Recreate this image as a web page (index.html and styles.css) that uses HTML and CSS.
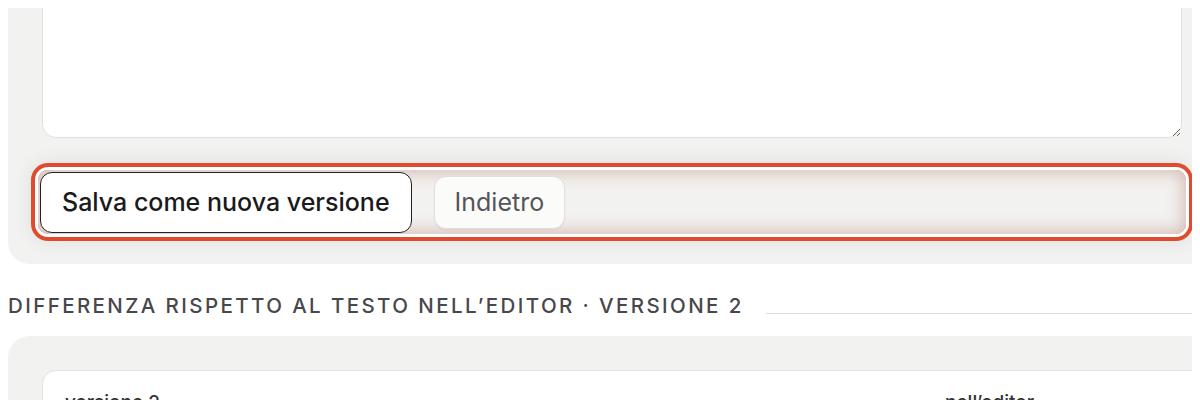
FILE: index.html
```html
<!DOCTYPE html>
<html lang="it">
<head>
<meta charset="utf-8">
<title>Editor versione</title>
<link rel="stylesheet" href="styles.css">
</head>
<body>
<div class="page">
  <section class="panel editor-panel">
    <textarea class="editor" aria-label="Testo"></textarea>
    <div class="actions highlight">
      <button class="btn btn-primary" type="button">Salva come nuova versione</button>
      <button class="btn btn-secondary" type="button">Indietro</button>
    </div>
  </section>

  <div class="section-title">
    <h2>Differenza rispetto al testo nell’editor · versione 2</h2>
    <span class="rule"></span>
  </div>

  <section class="panel diff-panel">
    <div class="diff-card">
      <div class="diff-head">
        <span class="col-left">versione 2</span>
        <span class="col-right">nell’editor</span>
      </div>
    </div>
  </section>
</div>
</body>
</html>
```

FILE: styles.css
```css
html {
  overflow: hidden;
  background: #ffffff;
}

body {
  margin: 8px;
  font-family: Inter, "Noto Sans", "Liberation Sans", sans-serif;
  color: #1c1c1c;
}

.page {
  margin-top: -49px;
  margin-right: -24px;
}

.panel {
  background: #f2f2f0;
  border-radius: 22px;
  padding: 34px;
}

.editor-panel {
  padding-bottom: 30px;
}

.editor {
  display: block;
  box-sizing: border-box;
  width: 100%;
  height: 145px;
  margin: 0;
  background: #ffffff;
  border: 1px solid #e0e0dd;
  border-radius: 14px;
  resize: vertical;
  font: inherit;
}

.actions {
  display: flex;
  align-items: center;
  gap: 22px;
  height: 64px;
  margin: 32px -4px 0;
  padding: 0 2px;
  box-sizing: border-box;
}

.highlight {
  border-radius: 10px;
  box-shadow:
    inset 0 0 16px 3px rgba(175, 115, 105, 0.42),
    0 0 0 3px #ffffff,
    0 0 0 7px #e04a2f,
    0 0 18px 8px rgba(0, 0, 0, 0.08);
}

.btn {
  font-family: Inter, "Noto Sans", "Liberation Sans", sans-serif;
  border-radius: 12px;
  cursor: pointer;
}

.btn-primary {
  height: 61px;
  padding: 0 21px;
  background: #ffffff;
  border: 1.5px solid #222222;
  color: #1a1a1a;
  font-size: 25px;
  font-weight: 500;
}

.btn-secondary {
  height: 53px;
  padding: 0 20px;
  background: #fbfbfa;
  border: 1px solid #e3dfdc;
  color: #55555a;
  font-size: 25px;
  font-weight: 400;
  box-shadow: 0 1px 2px rgba(0, 0, 0, 0.05);
}

.section-title {
  display: flex;
  align-items: flex-end;
  gap: 22px;
  margin-top: 28px;
  margin-right: -40px;
}

.section-title h2 {
  margin: 0;
  font-size: 20.5px;
  font-weight: 500;
  letter-spacing: 2.4px;
  text-transform: uppercase;
  color: #47474c;
  line-height: 28px;
  white-space: nowrap;
}

.rule {
  flex: 1;
  height: 1px;
  background: #dcdcd8;
  margin-bottom: 6px;
}

.diff-panel {
  margin-top: 16px;
}

.diff-card {
  background: #ffffff;
  border: 1px solid #e2e2df;
  border-radius: 14px;
  height: 200px;
  margin-right: -60px;
}

.diff-head {
  display: flex;
  padding: 20px 22px 14px;
  font-size: 19px;
  font-weight: 500;
  color: #333336;
}

.col-left {
  flex: 0 0 880px;
}
```
